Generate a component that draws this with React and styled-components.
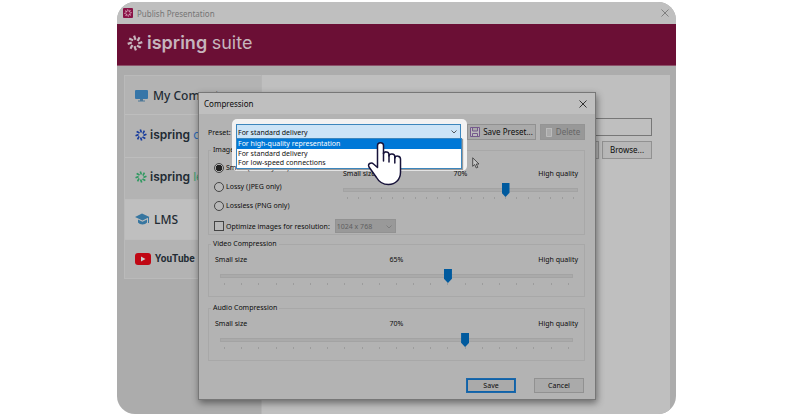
import React, { useState } from 'react';
import styled, { createGlobalStyle } from 'styled-components';

const GlobalStyle = createGlobalStyle`
  * {
    box-sizing: border-box;
  }
  body {
    margin: 0;
    background: #fff;
    font-family: "Noto Sans", sans-serif;
    font-size: 7px;
    color: #0c0c0c;
  }
  button, input, select {
    font: inherit;
    color: inherit;
  }
`;

const Page = styled.div`
  display: flex;
  min-height: 100vh;
  padding: 2px 116px 0 117px;
`;

const Window = styled.main`
  position: relative;
  flex: 1;
  display: flex;
  flex-direction: column;
  overflow: hidden;
  border-radius: 18px;
  background: #acacac;
`;

const TitleBar = styled.div`
  display: flex;
  align-items: center;
  height: 22px;
  padding: 0 7px 0 6px;
  gap: 4px;
  background: #bfbfbf;
  color: #757575;
  font-size: 8px;
`;

const CloseButton = styled.button`
  display: flex;
  margin-left: auto;
  padding: 0;
  border: 0;
  background: none;
`;

const AppIcon = styled.span`
  display: flex;
  padding: 1px;
  border-radius: 1px;
  background: #8a1246;
`;

const Header = styled.header`
  display: flex;
  align-items: center;
  height: 42px;
  padding: 0 10px 3px;
  gap: 4px;
  border-bottom: 1px solid #8c5068;
  background: #6b0f35;
  color: #c6b5bd;
`;

const Brand = styled.span`
  font-family: Inter, sans-serif;
  font-size: ${props => props.size}px;
  line-height: 1;
  font-weight: 600;
  white-space: nowrap;
  & span {
    color: ${props => props.tint};
    font-weight: 400;
  }
`;

const Main = styled.div`
  flex: 1;
  display: flex;
  padding: 9px 6px 0 7px;
`;

const Sidebar = styled.nav`
  flex: 0 0 25%;
  align-self: flex-start;
  display: flex;
  flex-direction: column;
  height: 204px;
  border: 1px solid #bababa;
  border-right: 0;
`;

const NavItem = styled.a`
  flex: 1;
  display: flex;
  align-items: center;
  padding: 0 0 ${props => (props.$brand ? 3 : 0)}px 10px;
  gap: ${props => (props.$brand ? 3 : 4)}px;
  overflow: hidden;
  border-bottom: 1px solid #bdbdbd;
  background: ${props => (props.$active ? '#bfbfbf' : '#b3b3b3')};
  color: #222b33;
  font-size: 12px;
  font-weight: 500;
  text-decoration: none;
  white-space: nowrap;
  &:last-child {
    border-bottom: 0;
  }
`;

const YouTubeName = styled.span`
  font-family: Roboto, sans-serif;
  font-size: 10px;
  font-weight: bold;
`;

const Content = styled.section`
  flex: 1;
  display: flex;
  flex-direction: column;
  align-items: flex-end;
  padding: 43px 18px 0;
  gap: 5px;
  border-left: 1px solid #b5b5b5;
  background: #bfbfbf;
`;

const PathInput = styled.input`
  width: 100%;
  height: 18px;
  border: 1px solid #777;
  background: #bfbfbf;
`;

const PathButtons = styled.div`
  display: flex;
  gap: 3px;
`;

const Button = styled.button`
  display: flex;
  align-items: center;
  justify-content: center;
  gap: 3px;
  height: ${props => props.height || 15}px;
  width: ${props => props.width}px;
  padding: 0;
  border: 1px solid #919191;
  outline: ${props => (props.$main ? '1px solid #0f62a8' : 'none')};
  outline-offset: -2px;
  border-color: ${props => (props.$main ? '#1c68aa' : '#919191')};
  background: #aaaaaa;
  font-size: ${props => props.size || 7}px;
  line-height: 1;
  white-space: nowrap;
  &:disabled {
    border-color: #949494;
    background: #989898;
    color: #666;
  }
`;

const PathButton = styled(Button)`
  background: #b7b7b7;
`;

const Overlay = styled.div`
  position: absolute;
  inset: 0;
  padding: 90px 80px 0 81px;
`;

const Dialog = styled.section`
  border: 1px solid #777;
  background: #b3b3b3;
  box-shadow: 1px 3px 7px rgba(0, 0, 0, 0.45);
`;

const DialogTitle = styled.header`
  display: flex;
  align-items: center;
  height: 21px;
  padding: 0 8px 0 5px;
  background: #bfbfbf;
  & h1 {
    margin: 0;
    font-size: 8px;
    font-weight: 400;
  }
`;

const Form = styled.form`
  display: flex;
  flex-direction: column;
  padding: 10px 10px 6px 9px;
`;

const PresetRow = styled.div`
  display: flex;
  align-items: center;
  gap: 4px;
  height: 16px;
  margin-bottom: 5px;
`;

const PresetLabel = styled.label`
  flex: 0 0 24px;
`;

const Combo = styled.div`
  position: relative;
  flex: 1;
  height: 16px;
  margin-right: 2px;
`;

const PresetSelect = styled.select`
  display: block;
  appearance: none;
  width: 100%;
  height: 16px;
  padding: 0 1px;
  border: 1px solid #3c86bd;
  background: #cce4f7;
`;

const SelectArrow = styled.svg`
  position: absolute;
  top: 6px;
  right: 4px;
  pointer-events: none;
`;

const Spotlight = styled.div`
  position: absolute;
  z-index: 0;
  top: -5px;
  right: -6px;
  bottom: -31px;
  left: -4px;
  border-radius: 5px;
  background: #f2f2f2;
`;

const ComboField = styled.div`
  position: relative;
  z-index: 2;
`;

const Options = styled.ul`
  position: absolute;
  z-index: 2;
  top: 14px;
  left: 0;
  right: -1px;
  margin: 0;
  padding: 0 0 1px;
  border: 1px solid #3c86bd;
  background: #fff;
  box-shadow: 1px 1px 1px #999;
  list-style: none;
`;

const Option = styled.li`
  height: ${props => (props.$hot ? 10 : 9)}px;
  padding-left: 1px;
  line-height: ${props => (props.$hot ? 10 : 9)}px;
  background: ${props => (props.$hot ? '#0078d7' : '#fff')};
  color: ${props => (props.$hot ? '#fff' : '#111')};
`;

const Hand = styled.svg`
  position: absolute;
  z-index: 3;
  top: 17px;
  left: 131px;
`;

const Arrow = styled.svg`
  position: absolute;
  top: 33px;
  right: -19px;
`;

const Group = styled.fieldset`
  min-width: 0;
  height: ${props => props.height}px;
  margin: 0 0 ${props => props.gap}px;
  padding: 0 6px;
  border: 1px solid #a8a8a8;
  & legend {
    height: 10px;
    padding: 0 2px;
    margin-left: -4px;
    line-height: 10px;
  }
`;

const ImageGrid = styled.div`
  display: flex;
  justify-content: space-between;
`;

const Choices = styled.div`
  display: flex;
  flex-direction: column;
  padding-top: 3px;
`;

// sits over the spotlight but under the open list
const Choice = styled.label`
  position: relative;
  z-index: 1;
  display: flex;
  align-items: center;
  height: 19px;
  gap: 2px;
  white-space: nowrap;
  & input {
    appearance: none;
    width: 10px;
    height: 10px;
    margin: 0 0 0 -1px;
    border: 1px solid #444;
    background: #b8b8b8;
  }
  & input[type='radio'] {
    border-radius: 50%;
  }
  & input[type='radio']:checked {
    background: radial-gradient(#222 0 3px, #b8b8b8 3px);
  }
`;

const ResolutionRow = styled.div`
  display: flex;
  align-items: center;
  height: 22px;
  gap: 5px;
`;

const ResolutionBox = styled.div`
  position: relative;
  height: 14px;
`;

const Resolution = styled.select`
  display: block;
  appearance: none;
  width: 61px;
  height: 14px;
  padding: 0 1px;
  border: 1px solid #929292;
  background: #999;
  color: #606060;
  opacity: 1;
`;

const Level = styled.div`
  flex: 0 0 ${props => props.width || 'auto'};
  padding-top: ${props => props.$top}px;
`;

const LevelLabels = styled.div`
  display: grid;
  grid-template-columns: 1fr auto 1fr;
  line-height: 10px;
  & span:last-child {
    text-align: right;
  }
`;

const Scale = styled.div`
  padding: 4px ${props => props.$inset}px 0;
`;

const Range = styled.input`
  display: block;
  appearance: none;
  width: 100%;
  height: 14px;
  margin: 0;
  background: none;
  &::-webkit-slider-runnable-track {
    height: 4px;
    border: 1px solid #a3a3a3;
    background: #aaa;
  }
  &::-webkit-slider-thumb {
    appearance: none;
    width: 8px;
    height: 14px;
    margin-top: -6px;
    background: #005a9e;
    clip-path: polygon(0 0, 100% 0, 100% 70%, 50% 100%, 0 70%);
  }
`;

const Ticks = styled.div`
  display: flex;
  justify-content: space-between;
  padding: 0 4px;
  & i {
    width: 1px;
    height: 2px;
    background: #9c9c9c;
  }
`;

const Actions = styled.footer`
  display: flex;
  justify-content: flex-end;
  gap: 18px;
  padding-right: 1px;
`;

function Flower({ size, color }) {
  return (
    <svg width={size} height={size} viewBox="0 0 16 16" aria-hidden="true">
      {[0, 45, 90, 135, 180, 225, 270, 315].map(angle => (
        <path
          key={angle}
          d="M7.1 .7 L8.5 4.8"
          transform={`rotate(${angle} 8 8)`}
          stroke={color}
          strokeWidth="2.2"
        />
      ))}
    </svg>
  );
}

function Cross({ color }) {
  return (
    <svg width="8" height="8" viewBox="0 0 8 8" aria-hidden="true">
      <path d="M.5 .5 7.5 7.5M7.5 .5.5 7.5" stroke={color} strokeWidth=".9" />
    </svg>
  );
}

function Slider({ label, start, inset, top, width }) {
  const [value, setValue] = useState(start);
  return (
    <Level width={width} $top={top}>
      <LevelLabels>
        <span>Small size</span>
        <span>{value}%</span>
        <span>High quality</span>
      </LevelLabels>
      <Scale $inset={inset}>
        <Range type="range" aria-label={label} value={value} onChange={e => setValue(e.target.value)} />
        <Ticks>
          {Array.from({ length: 21 }, (_, i) => <i key={i} />)}
        </Ticks>
      </Scale>
    </Level>
  );
}

function PresetCombo() {
  return (
    <Combo>
      <Spotlight />
      <ComboField>
        <PresetSelect id="preset" defaultValue="standard">
          <option value="high">For high-quality representation</option>
          <option value="standard">For standard delivery</option>
          <option value="low">For low-speed connections</option>
        </PresetSelect>
        <SelectArrow width="6" height="4" viewBox="0 0 6 4">
          <path d="M.5 .5 3 3 5.5 .5" fill="none" stroke="#333" strokeWidth=".8" />
        </SelectArrow>
      </ComboField>
      <Options role="listbox" aria-label="Presets">
        <Option role="option" aria-selected="true" $hot>For high-quality representation</Option>
        <Option role="option" aria-selected="false">For standard delivery</Option>
        <Option role="option" aria-selected="false">For low-speed connections</Option>
      </Options>
      <Hand width="35" height="45" viewBox="0 0 35 45">
        <path
          d="M10.5 26.5V4.5C10.5 .8 16.500 .8 16.500 4.5V12.8C17 10 22 10.3 22 13.5V15C22.500 12 27.800 12.3 27.800 15.5V17C28.500 14.2 33.500 14.5 33.500 18V31C33.500 38.5 28.5 43.5 21.5 43.5C15.500 43.5 12 41 9.500 36.500L2 26C.2 22.8 4 20.8 6.8 23.2Z"
          fill="#fff"
          stroke="#17133a"
          strokeWidth="1.5"
          strokeLinejoin="round"
        />
        <path d="M16.500 12V20M22 14V21M27.800 16V22" stroke="#17133a" strokeWidth="1.5" strokeLinecap="round" />
      </Hand>
      <Arrow width="8" height="12" viewBox="0 0 8 12">
        <path d="M.7 .8V9.300L2.700 7.500 4.300 11 5.800 10.300 4.300 7H7Z" fill="#c4c4c4" stroke="#333" strokeWidth=".8" />
      </Arrow>
    </Combo>
  );
}

function CompressionDialog() {
  return (
    <Dialog role="dialog" aria-labelledby="dialog-title">
      <DialogTitle>
        <h1 id="dialog-title">Compression</h1>
        <CloseButton aria-label="Close dialog"><Cross color="#222" /></CloseButton>
      </DialogTitle>
      <Form onSubmit={e => e.preventDefault()}>
        <PresetRow>
          <PresetLabel htmlFor="preset">Preset:</PresetLabel>
          <PresetCombo />
          <Button type="button" width={69} height={16} size={8}>
            <svg width="10" height="10" viewBox="0 0 10 10" aria-hidden="true">
              <path d="M.5 .5H9.500V9.500H.5ZM2.500 .5V4H7.500V.5M2.500 9.500V6.500H7.500V9.500" fill="#bbb" stroke="#75598c" />
            </svg>
            Save Preset...
          </Button>
          <Button type="button" width={45} height={16} size={8} disabled>
            <svg width="8" height="10" viewBox="0 0 8 10" aria-hidden="true">
              <path d="M1 1.500H7M1.500 2V9.500H6.500V2" fill="#aaa" stroke="#bbb" />
            </svg>
            Delete
          </Button>
        </PresetRow>
        <Group height={90} gap={4}>
          <legend>Image Compression</legend>
          <ImageGrid>
            <Choices>
              <Choice><input type="radio" name="mode" defaultChecked />Smart (PNG + JPEG)</Choice>
              <Choice><input type="radio" name="mode" />Lossy (JPEG only)</Choice>
              <Choice><input type="radio" name="mode" />Lossless (PNG only)</Choice>
            </Choices>
            <Slider label="Image quality" start={70} inset={0} top={14} width="235px" />
          </ImageGrid>
          <ResolutionRow>
            <Choice><input type="checkbox" />Optimize images for resolution:</Choice>
            <ResolutionBox>
              <Resolution aria-label="Resolution" disabled>
                <option>1024 x 768</option>
              </Resolution>
              <SelectArrow width="6" height="4" viewBox="0 0 6 4">
                <path d="M.5 .5 3 3 5.5 .5" fill="none" stroke="#777" strokeWidth=".8" />
              </SelectArrow>
            </ResolutionBox>
          </ResolutionRow>
        </Group>
        <Group height={58} gap={6}>
          <legend>Video Compression</legend>
          <Slider label="Video quality" start={65} inset={5} top={6} />
        </Group>
        <Group height={58} gap={17}>
          <legend>Audio Compression</legend>
          <Slider label="Audio quality" start={70} inset={5} top={6} />
        </Group>
        <Actions>
          <Button type="submit" width={50} $main>Save</Button>
          <Button type="button" width={50}>Cancel</Button>
        </Actions>
      </Form>
    </Dialog>
  );
}

function App() {
  return (
    <Page>
      <GlobalStyle />
      <Window>
        <TitleBar>
          <AppIcon><Flower size={8} color="#d0a0b6" /></AppIcon>
          Publish Presentation
          <CloseButton aria-label="Close"><Cross color="#777" /></CloseButton>
        </TitleBar>
        <Header>
          <Flower size={16} color="#c6b5bd" />
          <Brand size={18} tint="#c6b5bd">ispring <span>suite</span></Brand>
        </Header>
        <Main>
          <Sidebar>
            <NavItem href="#computer">
              <svg width="14" height="13" viewBox="0 0 14 13" aria-hidden="true">
                <rect width="13" height="9" y="1" rx="1" fill="#3776a8" />
                <path d="M5 10H8V11.500H10V12.500H3V11.500H5Z" fill="#4d7898" />
              </svg>
              My Computer
            </NavItem>
            <NavItem href="#cloud" $brand>
              <Flower size={12} color="#173b9c" />
              <Brand size={12} tint="#2f6bb5">ispring <span>cloud</span></Brand>
            </NavItem>
            <NavItem href="#learn" $brand>
              <Flower size={12} color="#2f9960" />
              <Brand size={12} tint="#3f9f70">ispring <span>learn</span></Brand>
            </NavItem>
            <NavItem href="#lms" $active>
              <svg width="15" height="12" viewBox="0 0 15 12" aria-hidden="true">
                <path d="M0 4 7 .5 14.500 4 7.500 7.500ZM3 6.500 7.500 8.800 12 6.500V9.500C10 12 5 12 3 9.500Z" fill="#3776a0" />
                <path d="M13.500 4V10" stroke="#3776a0" />
              </svg>
              LMS
            </NavItem>
            <NavItem href="#youtube">
              <svg width="16" height="12" viewBox="0 0 16 12" aria-hidden="true">
                <rect width="16" height="12" rx="3" fill="#c00714" />
                <path d="M6 3.500V8.500L10.500 6Z" fill="#ccc" />
              </svg>
              <YouTubeName>YouTube</YouTubeName>
            </NavItem>
          </Sidebar>
          <Content>
            <PathInput aria-label="Folder" />
            <PathButtons>
              <PathButton type="button" width={50} height={18} size={8} aria-label="Open folder" />
              <PathButton type="button" width={50} height={18} size={8}>Browse...</PathButton>
            </PathButtons>
          </Content>
        </Main>
        <Overlay>
          <CompressionDialog />
        </Overlay>
      </Window>
    </Page>
  );
}

export default App;
